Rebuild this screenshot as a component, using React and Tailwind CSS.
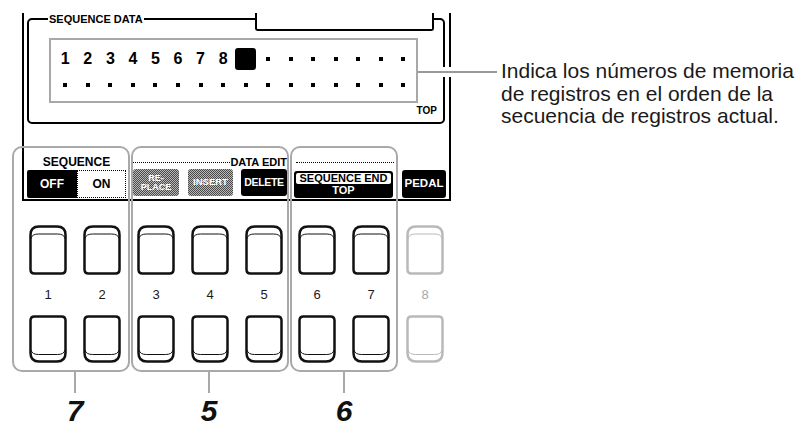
const lcdFont = "font-['Liberation_Sans',Arial,sans-serif] font-bold";

function PadTop({ light }) {
  const c = light ? '#b9b9b9' : '#111';
  return (
    <svg width="38" height="50" viewBox="0 0 38 50">
      <path d="M1.5 10 Q1.5 1.5 10 1.5 H28 Q36.5 1.5 36.5 10 V44.5 Q36.5 48.5 32.5 48.5 H5.5 Q1.5 48.5 1.5 44.5 Z" fill="none" stroke={c} strokeWidth="2.5" />
      <path d="M2 13.5 Q3 9 9.5 9 H28.5 Q35 9 36 13.5" fill="none" stroke={c} strokeWidth="1" />
    </svg>
  );
}

function PadBottom({ light }) {
  const c = light ? '#b9b9b9' : '#111';
  return (
    <svg width="38" height="48" viewBox="0 0 38 48">
      <path d="M1.5 5.5 Q1.5 1.5 5.5 1.5 H32.5 Q36.5 1.5 36.5 5.5 V38 Q36.5 46.5 28 46.5 H10 Q1.5 46.5 1.5 38 Z" fill="none" stroke={c} strokeWidth="2.5" />
      <path d="M2 35 Q3 39.5 9.5 39.5 H28.5 Q35 39.5 36 35" fill="none" stroke={c} strokeWidth="1" />
    </svg>
  );
}

function Pads({ nums, light, className }) {
  return (
    <div className={`flex gap-[16px] ${className}`}>
      {nums.map((n) => (
        <div key={n} className="flex flex-col w-[38px]">
          <PadTop light={light} />
          <div className={`h-[40px] text-center text-[13px] leading-[40px] font-['Liberation_Sans',Arial,sans-serif] ${light ? 'text-[#a8a8a8]' : 'text-[#1a1a1a]'}`}>{n}</div>
          <PadBottom light={light} />
        </div>
      ))}
    </div>
  );
}

const dither = "bg-[repeating-conic-gradient(#4a4a4a_0_25%,#b8b8b8_0_50%)] bg-size-[2px_2px]";

function Callout({ n, className }) {
  return (
    <div className={`flex flex-col items-center w-[40px] ${className}`}>
      <div className="w-[2px] h-[21px] bg-[#a9a9a9]" />
      <div className="mt-[7px] text-[30px] leading-[22px] font-bold italic font-['Liberation_Sans',Arial,sans-serif] text-[#111]">{n}</div>
    </div>
  );
}

function Lcd() {
  const cells = Array.from({ length: 16 });
  return (
    <div className="ml-[22px] w-[429px] h-[188px] pt-[5px] border-l-2 border-r-2 border-b-2 border-black">
      <div className="relative ml-[3px] w-[418px] h-[106px] border-2 border-black rounded-[5px]">
        <div className="absolute left-[226px] -top-[7px] w-[179px] h-[18px] bg-white border-l-2 border-r-2 border-b-2 border-black rounded-b-[3px]" />
        <div className="-mt-[7px] ml-[19px] flex">
          <span className={`bg-white px-[1px] text-[11px] leading-[12px] ${lcdFont}`}>SEQUENCE DATA</span>
        </div>
        <div className="mt-[13px] ml-[20px] w-[369px] h-[65px] border-2 border-[#a8a8a8] pt-[8px] pl-[3px]">
          <div className="flex h-[22px] items-center">
            {cells.map((_, i) => (
              <div key={i} className="w-[22.55px] flex justify-center">
                {i < 8 ? (
                  <span className={`text-[16px] leading-[16px] ${lcdFont}`}>{i + 1}</span>
                ) : i === 8 ? (
                  <span className="w-[21px] h-[22px] bg-black rounded-[3px]" />
                ) : (
                  <span className="w-[4px] h-[4px] bg-black" />
                )}
              </div>
            ))}
          </div>
          <div className="flex h-[22px] items-center mt-[4px]">
            {cells.map((_, i) => (
              <div key={i} className="w-[22.55px] flex justify-center">
                <span className="w-[4px] h-[4px] bg-black" />
              </div>
            ))}
          </div>
        </div>
        <div className={`flex justify-end pr-[6px] mt-[3px] text-[10px] leading-[10px] ${lcdFont}`}>TOP</div>
      </div>
    </div>
  );
}

export default function App() {
  return (
    <div className="w-[798px] h-[423px] bg-white overflow-hidden flex text-black">
      <div className="relative w-[460px] shrink-0 pt-[13px]">
        <Lcd />

        <div className="flex items-start -mt-[55px] ml-[12px]">
          <div className="w-[118px] h-[226px] border-2 border-[#a9a9a9] rounded-[10px] pt-[7px]">
            <div className="h-[70px] ml-[13px] w-[99px]">
              <div className={`h-[14px] text-center text-[12px] leading-[14px] ${lcdFont}`}>SEQUENCE</div>
              <div className={`mt-[1px] h-[28px] flex text-[12px] ${lcdFont}`}>
                <div className="w-[50px] bg-black text-white rounded-l-[2px] flex items-center justify-center">OFF</div>
                <div className="flex-1 border border-dotted border-black flex items-center justify-center">ON</div>
              </div>
            </div>
            <Pads nums={[1, 2]} className="pl-[15px]" />
          </div>

          <div className="ml-[1px] w-[158px] h-[226px] border-2 border-[#a9a9a9] rounded-[10px] pt-[7px]">
            <div className="h-[70px] w-[154px] overflow-hidden">
              <div className="h-[14px] flex items-center">
                <div className="w-[99px] border-t border-dotted border-black" />
                <span className={`text-[11px] leading-[14px] whitespace-nowrap ${lcdFont}`}>DATA EDIT</span>
              </div>
              <div className={`h-[27px] flex ${lcdFont}`}>
                <div className={`w-[46px] rounded-[3px] ${dither} text-white text-[9px] leading-[9px] flex flex-col items-center justify-center`}>
                  <span>RE-</span>
                  <span>PLACE</span>
                </div>
                <div className={`ml-[9px] w-[45px] rounded-[3px] ${dither} text-white text-[9.5px] flex items-center justify-center`}>INSERT</div>
                <div className="ml-[8px] w-[46px] rounded-[3px] bg-black text-white text-[10.5px] tracking-[-0.3px] flex items-center justify-center">DELETE</div>
              </div>
            </div>
            <Pads nums={[3, 4, 5]} className="pl-[4px]" />
          </div>

          <div className="ml-[1px] w-[108px] h-[226px] border-2 border-[#a9a9a9] rounded-[10px] pt-[7px]">
            <div className="h-[70px]">
              <div className="h-[14px] flex items-center">
                <div className="ml-[4px] w-[98px] border-t border-dotted border-black" />
              </div>
              <div className={`ml-[2px] mt-[2px] w-[99px] h-[27px] bg-black rounded-[3px] p-[2px] flex flex-col ${lcdFont}`}>
                <div className="h-[11px] bg-white rounded-[2px] text-[11px] leading-[11px] text-center">SEQUENCE END</div>
                <div className="flex-1 text-white text-[11px] leading-[11px] flex items-center justify-center">TOP</div>
              </div>
            </div>
            <Pads nums={[6, 7]} className="pl-[6px]" />
          </div>

          <div className="ml-[4px] pt-[9px]">
            <div className="h-[70px] pt-[15px]">
              <div className={`w-[44px] h-[28px] bg-black rounded-[3px] text-white text-[11.5px] flex items-center justify-center ${lcdFont}`}>PEDAL</div>
            </div>
            <Pads nums={[8]} light className="pl-[4px]" />
          </div>
        </div>

        <div className="flex ml-[55px]">
          <Callout n="7" />
          <Callout n="5" className="ml-[94px]" />
          <Callout n="6" className="ml-[95px]" />
        </div>

        <div className="absolute top-[67px] left-[418px] w-[79px] h-[10px] border-y-4 border-white bg-[#999]" />
      </div>

      <div className="pl-[41px] pt-[60px] text-[21px] leading-[22.5px] text-[#1a1a1a] font-['Liberation_Sans',Arial,sans-serif] whitespace-nowrap">
        <div>Indica los números de memoria</div>
        <div>de registros en el orden de la</div>
        <div>secuencia de registros actual.</div>
      </div>
    </div>
  );
}
